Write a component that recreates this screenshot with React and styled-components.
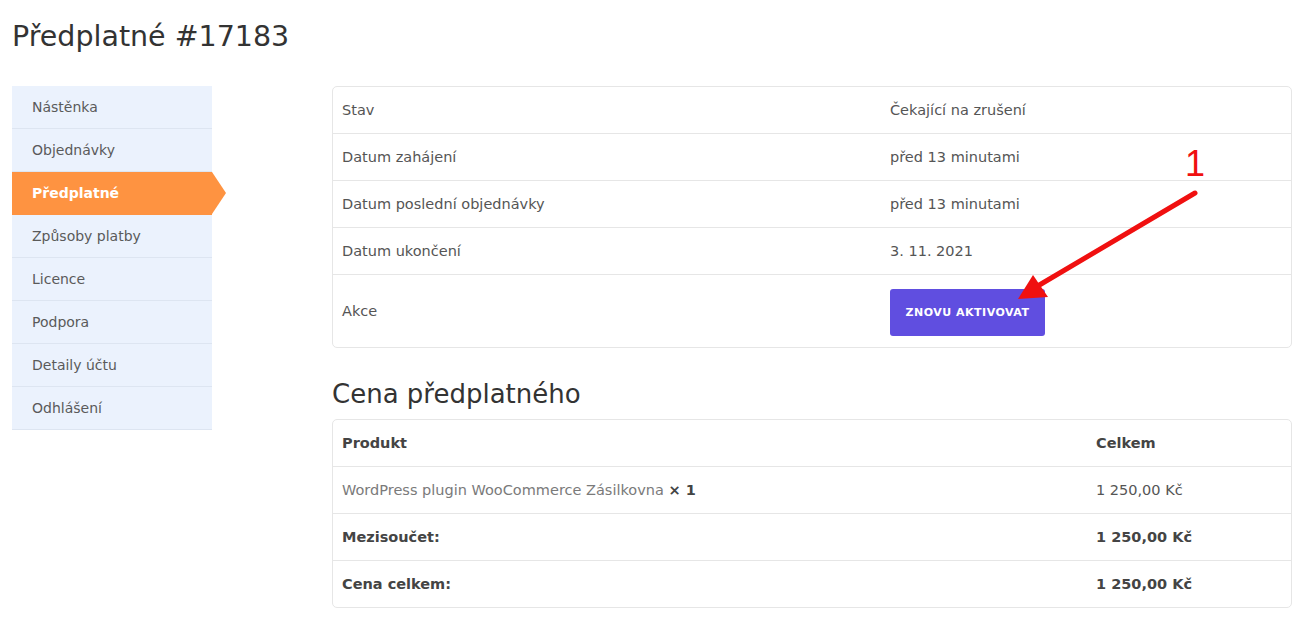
import React from "react";
import styled, { createGlobalStyle } from "styled-components";

const GlobalStyle = createGlobalStyle`
  body {
    margin: 0;
    background: #fff;
    font-family: "DejaVu Sans", "Noto Sans", sans-serif;
    color: #555;
  }
`;

const Page = styled.div`
  position: relative;
  padding: 20px 16px 12px 12px;
`;

const Title = styled.h1`
  margin: 0 0 32px;
  font-size: 28.5px;
  font-weight: 400;
  line-height: 34px;
  color: #333;
`;

const Layout = styled.div`
  display: flex;
  gap: 120px;
  align-items: flex-start;
`;

const Nav = styled.ul`
  list-style: none;
  margin: 0;
  padding: 0;
  width: 200px;
  flex-shrink: 0;
`;

const NavItem = styled.li`
  position: relative;
  height: 43px;
  box-sizing: border-box;
  padding-left: 20px;
  display: flex;
  align-items: center;
  font-size: 14px;
  background: ${(p) => (p.$active ? "#fe9341" : "#ebf2fd")};
  color: ${(p) => (p.$active ? "#fff" : "#5a5a5a")};
  font-weight: ${(p) => (p.$active ? 600 : 400)};
  border-bottom: 1px solid ${(p) => (p.$active ? "#fe9341" : "#dde5f1")};

  &::after {
    content: "";
    display: ${(p) => (p.$active ? "block" : "none")};
    position: absolute;
    right: -14px;
    top: 0;
    border-top: 21.5px solid transparent;
    border-bottom: 21.5px solid transparent;
    border-left: 14px solid #fe9341;
  }
`;

const Main = styled.div`
  flex: 1;
  min-width: 0;
`;

const Card = styled.table`
  width: 100%;
  table-layout: fixed;
  border-collapse: separate;
  border-spacing: 0;
  border: 1px solid #e6e6e6;
  border-radius: 5px;
  font-size: 14.5px;
`;

const Col = styled.col`
  width: ${(p) => p.$w};
`;

const Cell = styled.td`
  padding: 0 9px;
  height: ${(p) => p.$h || 46}px;
  border-top: ${(p) => (p.$first ? "none" : "1px solid #e6e6e6")};
  font-weight: ${(p) => (p.$bold ? 700 : 400)};
  color: ${(p) => (p.$bold ? "#444" : "#555")};
  vertical-align: middle;
  white-space: nowrap;
`;

const ProductName = styled.span`
  color: #7a7a7a;
`;

const Qty = styled.strong`
  color: #444;
`;

const Button = styled.button`
  height: 47px;
  width: 155px;
  border: none;
  border-radius: 3px;
  background: #604ee0;
  color: #fff;
  font-family: "DejaVu Sans", sans-serif;
  font-size: 11px;
  font-weight: 700;
  letter-spacing: 0.5px;
  text-transform: uppercase;
  margin: 4px 0 2px;
`;

const SectionTitle = styled.h2`
  margin: 30px 0 9px;
  font-size: 26px;
  font-weight: 400;
  line-height: 32px;
  color: #333;
`;

const Annotation = styled.svg`
  position: absolute;
  left: 0;
  top: 0;
  pointer-events: none;
`;

const navItems = [
  "Nástěnka",
  "Objednávky",
  "Předplatné",
  "Způsoby platby",
  "Licence",
  "Podpora",
  "Detaily účtu",
  "Odhlášení",
];

const info = [
  ["Stav", "Čekající na zrušení"],
  ["Datum zahájení", "před 13 minutami"],
  ["Datum poslední objednávky", "před 13 minutami"],
  ["Datum ukončení", "3. 11. 2021"],
];

export default function App() {
  return (
    <>
      <GlobalStyle />
      <Page>
        <Title>Předplatné #17183</Title>
        <Layout>
          <Nav>
            {navItems.map((n) => (
              <NavItem key={n} $active={n === "Předplatné"}>
                {n}
              </NavItem>
            ))}
          </Nav>
          <Main>
            <Card>
              <colgroup>
                <Col $w="548px" />
                <Col $w="auto" />
              </colgroup>
              <tbody>
                {info.map(([k, v], i) => (
                  <tr key={k}>
                    <Cell $first={i === 0}>{k}</Cell>
                    <Cell $first={i === 0}>{v}</Cell>
                  </tr>
                ))}
                <tr>
                  <Cell $h={72}>Akce</Cell>
                  <Cell $h={72}>
                    <Button>Znovu aktivovat</Button>
                  </Cell>
                </tr>
              </tbody>
            </Card>

            <SectionTitle>Cena předplatného</SectionTitle>

            <Card>
              <colgroup>
                <Col $w="754px" />
                <Col $w="auto" />
              </colgroup>
              <tbody>
                <tr>
                  <Cell $first $bold>Produkt</Cell>
                  <Cell $first $bold>Celkem</Cell>
                </tr>
                <tr>
                  <Cell>
                    <ProductName>WordPress plugin WooCommerce Zásilkovna</ProductName>{" "}
                    <Qty>× 1</Qty>
                  </Cell>
                  <Cell>1 250,00 Kč</Cell>
                </tr>
                <tr>
                  <Cell $bold>Mezisoučet:</Cell>
                  <Cell $bold>1 250,00 Kč</Cell>
                </tr>
                <tr>
                  <Cell $bold>Cena celkem:</Cell>
                  <Cell $bold>1 250,00 Kč</Cell>
                </tr>
              </tbody>
            </Card>
          </Main>
        </Layout>

        <Annotation width="1308" height="620" viewBox="0 0 1308 620">
          <text
            x="1185"
            y="176"
            fill="#f01010"
            fontSize="36"
            fontFamily="Liberation Sans, Arial, sans-serif"
          >
            1
          </text>
          <line x1="1195" y1="193" x2="1036" y2="287" stroke="#f01010" strokeWidth="5" strokeLinecap="round" />
          <polygon points="1018,299 1033,275 1048,297" fill="#f01010" />
        </Annotation>
      </Page>
    </>
  );
}
